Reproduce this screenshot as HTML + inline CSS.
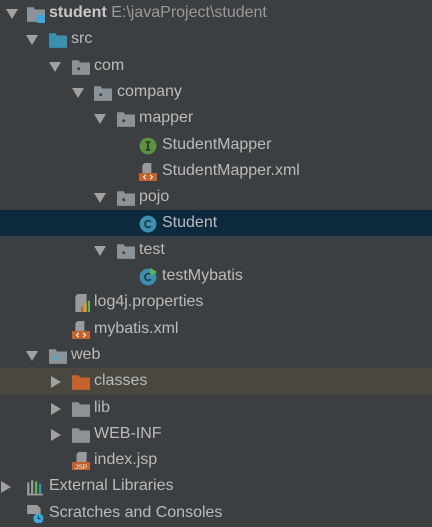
<!DOCTYPE html><html><head><style>
body{margin:0;width:432px;height:526px;background:#3c3f41;font-family:"Liberation Sans",sans-serif;font-size:16px;color:#bbbbbb;overflow:hidden;position:relative}
.r{position:absolute;left:0;width:432px;height:26px}
.a{position:absolute;top:8px;width:0;height:0}
.d{border-left:6px solid transparent;border-right:6px solid transparent;border-top:10px solid #a0a0a0}
.rt{top:7px;border-top:6px solid transparent;border-bottom:6px solid transparent;border-left:10px solid #a0a0a0}
.i{position:absolute;top:4px;width:18px;height:18px}
.t{position:absolute;top:3px;white-space:nowrap}
</style></head><body>
<div class="r" style="top:210px;background:#0d293e"></div>
<div class="r" style="top:368px;background:#4a473f"></div>
<div id="c"></div>
<script>
var F='<svg class="i" viewBox="0 0 16 16"><path d="M0 2h6l1 2h9v11H0z" fill="COL"/>EXTRA</svg>';
function fold(c,e){return F.replace('COL',c).replace('EXTRA',e||'')}
var pk=fold('#8a9399','<circle cx="6" cy="9.5" r="1.3" fill="#3c3f41"/>');
var icons={
 proj:fold('#8a9399','<rect x="9" y="9" width="7" height="7" fill="#3fa9dc"/>'),
 src:fold('#3d8fb0'),pk:pk,
 web:fold('#8a9399','<circle cx="6" cy="9.5" r="1.7" fill="#3fa9dc"/>'),
 org:fold('#c5632d'),gray:fold('#8a9399'),
 I:'<svg class="i" viewBox="0 0 16 16"><circle cx="8" cy="8" r="7.5" fill="#5a9240"/><path d="M6 4.5h4M6 11.5h4M8 4.5v7" stroke="#2b3b22" stroke-width="1.6"/></svg>',
 C:'<svg class="i" viewBox="0 0 16 16"><circle cx="8" cy="8" r="7.5" fill="#3d8fb0"/><path d="M10.5 6a3 3 0 1 0 0 4" stroke="#1d3e4e" stroke-width="1.6" fill="none"/></svg>',
 CT:'<svg class="i" viewBox="0 0 16 16"><circle cx="8" cy="8" r="7.5" fill="#3d8fb0"/><path d="M10.5 6a3 3 0 1 0 0 4" stroke="#1d3e4e" stroke-width="1.6" fill="none"/><path d="M10 0l6 3.5-6 3.5z" fill="#5fb84a"/></svg>',
 xml:'<svg class="i" viewBox="0 0 16 16"><path d="M5 0h6v9H3V2z" fill="#9a9a9a"/><rect x="0" y="9" width="16" height="7" fill="#c5632d"/><path d="M6 10.5l-2 2 2 2M10 10.5l2 2-2 2" stroke="#eee" fill="none"/></svg>',
 prop:'<svg class="i" viewBox="0 0 16 16"><path d="M5 0h8v16H3V2z" fill="#9a9a9a"/><rect x="8" y="11" width="2" height="5" fill="#c5632d"/><rect x="11" y="8" width="2" height="8" fill="#e0a030"/><rect x="14" y="6" width="2" height="10" fill="#5fb84a"/></svg>',
 jsp:'<svg class="i" viewBox="0 0 16 16"><path d="M6 0h7v9H4V2z" fill="#9a9a9a"/><rect x="0" y="9" width="16" height="7" fill="#c5632d"/><text x="8" y="15.3" font-size="6" fill="#eee" text-anchor="middle" font-family="Liberation Sans">JSP</text></svg>',
 lib:'<svg class="i" viewBox="0 0 16 16"><rect x="1" y="4" width="2" height="11" fill="#9a9a9a"/><rect x="4.5" y="2" width="2" height="13" fill="#9a9a9a"/><rect x="8" y="3" width="2" height="12" fill="#5fb84a"/><rect x="11.5" y="5" width="2" height="10" fill="#3d8fb0"/><rect x="1" y="14" width="14" height="1.5" fill="#9a9a9a"/></svg>',
 scr:'<svg class="i" viewBox="0 0 16 16"><path d="M1 0h9l3 3v5H1z" fill="#9a9a9a"/><circle cx="11" cy="12" r="4.5" fill="#3fa9dc"/><path d="M11 9.5v2.7h2" stroke="#1d3e4e" fill="none"/></svg>'
};
var rows=[
['d',12,27,49,'proj','<b style="color:#c8c8c8">student</b> <span style="color:#9a9a9a">E:\\javaProject\\student</span>'],
['d',32,49,71,'src','src'],['d',55,72,94,'pk','com'],['d',78,94,117,'pk','company'],['d',100,117,139,'pk','mapper'],
['',0,139,162,'I','StudentMapper'],['',0,139,162,'xml','StudentMapper.xml'],
['d',100,117,139,'pk','pojo'],['',0,139,162,'C','Student'],['d',100,117,139,'pk','test'],['',0,139,162,'CT','testMybatis'],
['',0,72,94,'prop','log4j.properties'],['',0,72,94,'xml','mybatis.xml'],
['d',32,49,71,'web','web'],['rt',55,72,94,'org','classes'],['rt',55,72,94,'gray','lib'],['rt',55,72,94,'gray','WEB-INF'],
['',0,72,94,'jsp','index.jsp'],['rt',5,26,49,'lib','External Libraries'],['',0,26,49,'scr','Scratches and Consoles']];
var h='';rows.forEach(function(r,i){var top=Math.round(1+i*26.3);
h+='<div class="r" style="top:'+top+'px">'+(r[0]?'<div class="a '+r[0]+'" style="left:'+(r[0]=='d'?r[1]-6:r[1]-4)+'px"></div>':'')+icons[r[4]].replace('class="i"','class="i" style="left:'+r[2]+'px"')+'<div class="t" style="left:'+r[3]+'px">'+r[5]+'</div></div>';});
document.getElementById('c').innerHTML=h;
</script></body></html>
